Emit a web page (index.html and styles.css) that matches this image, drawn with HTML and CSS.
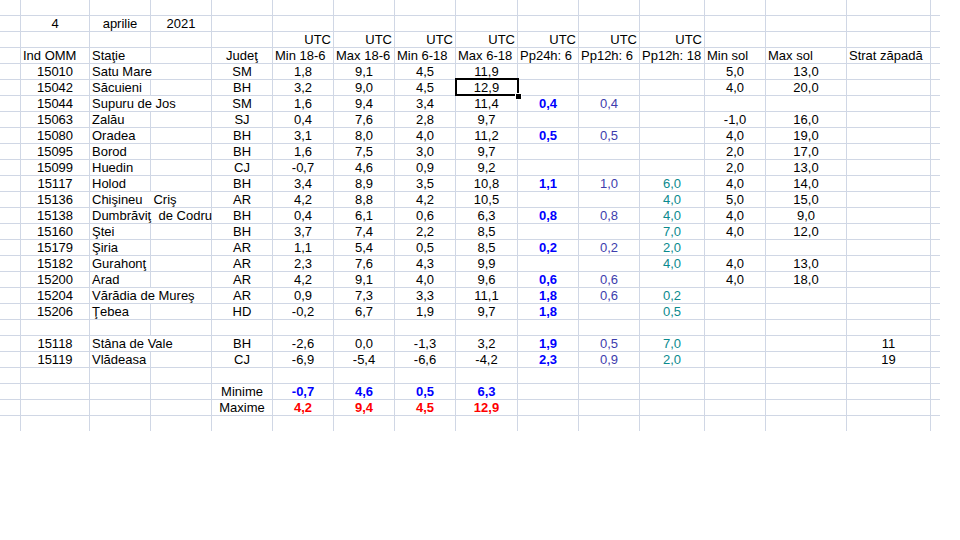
FILE: index.html
```html
<!DOCTYPE html>
<html lang="ro">
<head>
<meta charset="utf-8">
<title>Temperaturi 4 aprilie 2021</title>
<link rel="stylesheet" href="styles.css">
</head>
<body>
<div class="sheet">
  <div class="row"></div>
  <div class="row"><span class="ind">4</span><span class="mon">aprilie</span><span class="yr">2021</span></div>
  <div class="row"><span class="t1 r">UTC</span><span class="t2 r">UTC</span><span class="t3 r">UTC</span><span class="t4 r">UTC</span><span class="p24 r">UTC</span><span class="p6 r">UTC</span><span class="p18 r">UTC</span></div>
  <div class="row hdr"><span class="ind l">Ind OMM</span><span class="name">Staţie</span><span class="jud">Judeţ</span><span class="t1 l">Min 18-6</span><span class="t2 l">Max 18-6</span><span class="t3 l">Min 6-18</span><span class="t4 l">Max 6-18</span><span class="p24 l">Pp24h: 6</span><span class="p6 l">Pp12h: 6</span><span class="p18 l">Pp12h: 18</span><span class="smin l">Min sol</span><span class="smax l">Max sol</span><span class="snow l">Strat zăpadă</span></div>

  <div class="row"><span class="ind">15010</span><span class="name wide">Satu Mare</span><span class="jud">SM</span><span class="t1">1,8</span><span class="t2">9,1</span><span class="t3">4,5</span><span class="t4">11,9</span><span class="smin">5,0</span><span class="smax">13,0</span></div>
  <div class="row"><span class="ind">15042</span><span class="name">Săcuieni</span><span class="jud">BH</span><span class="t1">3,2</span><span class="t2">9,0</span><span class="t3">4,5</span><span class="t4 sel">12,9</span><span class="smin">4,0</span><span class="smax">20,0</span></div>
  <div class="row"><span class="ind">15044</span><span class="name wide">Supuru de Jos</span><span class="jud">SM</span><span class="t1">1,6</span><span class="t2">9,4</span><span class="t3">3,4</span><span class="t4">11,4</span><span class="p24">0,4</span><span class="p6">0,4</span></div>
  <div class="row"><span class="ind">15063</span><span class="name">Zalău</span><span class="jud">SJ</span><span class="t1">0,4</span><span class="t2">7,6</span><span class="t3">2,8</span><span class="t4">9,7</span><span class="smin">-1,0</span><span class="smax">16,0</span></div>
  <div class="row"><span class="ind">15080</span><span class="name">Oradea</span><span class="jud">BH</span><span class="t1">3,1</span><span class="t2">8,0</span><span class="t3">4,0</span><span class="t4">11,2</span><span class="p24">0,5</span><span class="p6">0,5</span><span class="smin">4,0</span><span class="smax">19,0</span></div>
  <div class="row"><span class="ind">15095</span><span class="name">Borod</span><span class="jud">BH</span><span class="t1">1,6</span><span class="t2">7,5</span><span class="t3">3,0</span><span class="t4">9,7</span><span class="smin">2,0</span><span class="smax">17,0</span></div>
  <div class="row"><span class="ind">15099</span><span class="name">Huedin</span><span class="jud">CJ</span><span class="t1">-0,7</span><span class="t2">4,6</span><span class="t3">0,9</span><span class="t4">9,2</span><span class="smin">2,0</span><span class="smax">13,0</span></div>
  <div class="row"><span class="ind">15117</span><span class="name">Holod</span><span class="jud">BH</span><span class="t1">3,4</span><span class="t2">8,9</span><span class="t3">3,5</span><span class="t4">10,8</span><span class="p24">1,1</span><span class="p6">1,0</span><span class="p18">6,0</span><span class="smin">4,0</span><span class="smax">14,0</span></div>
  <div class="row"><span class="ind">15136</span><span class="name wide">Chişineu   Criş</span><span class="jud">AR</span><span class="t1">4,2</span><span class="t2">8,8</span><span class="t3">4,2</span><span class="t4">10,5</span><span class="p18">4,0</span><span class="smin">5,0</span><span class="smax">15,0</span></div>
  <div class="row"><span class="ind">15138</span><span class="name wide">Dumbrăviţ  de Codru</span><span class="jud">BH</span><span class="t1">0,4</span><span class="t2">6,1</span><span class="t3">0,6</span><span class="t4">6,3</span><span class="p24">0,8</span><span class="p6">0,8</span><span class="p18">4,0</span><span class="smin">4,0</span><span class="smax">9,0</span></div>
  <div class="row"><span class="ind">15160</span><span class="name">Ştei</span><span class="jud">BH</span><span class="t1">3,7</span><span class="t2">7,4</span><span class="t3">2,2</span><span class="t4">8,5</span><span class="p18">7,0</span><span class="smin">4,0</span><span class="smax">12,0</span></div>
  <div class="row"><span class="ind">15179</span><span class="name">Şiria</span><span class="jud">AR</span><span class="t1">1,1</span><span class="t2">5,4</span><span class="t3">0,5</span><span class="t4">8,5</span><span class="p24">0,2</span><span class="p6">0,2</span><span class="p18">2,0</span></div>
  <div class="row"><span class="ind">15182</span><span class="name">Gurahonţ</span><span class="jud">AR</span><span class="t1">2,3</span><span class="t2">7,6</span><span class="t3">4,3</span><span class="t4">9,9</span><span class="p18">4,0</span><span class="smin">4,0</span><span class="smax">13,0</span></div>
  <div class="row"><span class="ind">15200</span><span class="name">Arad</span><span class="jud">AR</span><span class="t1">4,2</span><span class="t2">9,1</span><span class="t3">4,0</span><span class="t4">9,6</span><span class="p24">0,6</span><span class="p6">0,6</span><span class="smin">4,0</span><span class="smax">18,0</span></div>
  <div class="row"><span class="ind">15204</span><span class="name wide">Vărădia de Mureş</span><span class="jud">AR</span><span class="t1">0,9</span><span class="t2">7,3</span><span class="t3">3,3</span><span class="t4">11,1</span><span class="p24">1,8</span><span class="p6">0,6</span><span class="p18">0,2</span></div>
  <div class="row"><span class="ind">15206</span><span class="name">Ţebea</span><span class="jud">HD</span><span class="t1">-0,2</span><span class="t2">6,7</span><span class="t3">1,9</span><span class="t4">9,7</span><span class="p24">1,8</span><span class="p18">0,5</span></div>
  <div class="row"></div>
  <div class="row"><span class="ind">15118</span><span class="name wide">Stâna de Vale</span><span class="jud">BH</span><span class="t1">-2,6</span><span class="t2">0,0</span><span class="t3">-1,3</span><span class="t4">3,2</span><span class="p24">1,9</span><span class="p6">0,5</span><span class="p18">7,0</span><span class="snow">11</span></div>
  <div class="row"><span class="ind">15119</span><span class="name">Vlădeasa</span><span class="jud">CJ</span><span class="t1">-6,9</span><span class="t2">-5,4</span><span class="t3">-6,6</span><span class="t4">-4,2</span><span class="p24">2,3</span><span class="p6">0,9</span><span class="p18">2,0</span><span class="snow">19</span></div>
  <div class="row"></div>
  <div class="row min"><span class="jud">Minime</span><span class="t1">-0,7</span><span class="t2">4,6</span><span class="t3">0,5</span><span class="t4">6,3</span></div>
  <div class="row max"><span class="jud">Maxime</span><span class="t1">4,2</span><span class="t2">9,4</span><span class="t3">4,5</span><span class="t4">12,9</span></div>
  <div class="row"></div>
</div>
</body>
</html>
```
FILE: styles.css
```css
html, body {
  margin: 0;
  padding: 0;
  background: #ffffff;
}

body {
  font-family: "Liberation Sans", Arial, sans-serif;
  font-size: 13px;
  color: #000000;
}

.sheet {
  --grid: #d0d7e5;
  width: 940px;
  height: 431px;
  display: flex;
  flex-direction: column;
  row-gap: 1px;
  background:
    linear-gradient(var(--grid), var(--grid)) 20px 0 / 1px 100% no-repeat,
    linear-gradient(var(--grid), var(--grid)) 89px 0 / 1px 100% no-repeat,
    linear-gradient(var(--grid), var(--grid)) 150px 0 / 1px 100% no-repeat,
    linear-gradient(var(--grid), var(--grid)) 211px 0 / 1px 100% no-repeat,
    linear-gradient(var(--grid), var(--grid)) 272px 0 / 1px 100% no-repeat,
    linear-gradient(var(--grid), var(--grid)) 333px 0 / 1px 100% no-repeat,
    linear-gradient(var(--grid), var(--grid)) 394px 0 / 1px 100% no-repeat,
    linear-gradient(var(--grid), var(--grid)) 455px 0 / 1px 100% no-repeat,
    linear-gradient(var(--grid), var(--grid)) 517px 0 / 1px 100% no-repeat,
    linear-gradient(var(--grid), var(--grid)) 578px 0 / 1px 100% no-repeat,
    linear-gradient(var(--grid), var(--grid)) 639px 0 / 1px 100% no-repeat,
    linear-gradient(var(--grid), var(--grid)) 704px 0 / 1px 100% no-repeat,
    linear-gradient(var(--grid), var(--grid)) 765px 0 / 1px 100% no-repeat,
    linear-gradient(var(--grid), var(--grid)) 846px 0 / 1px 100% no-repeat,
    linear-gradient(var(--grid), var(--grid)) 930px 0 / 1px 100% no-repeat,
    repeating-linear-gradient(to bottom, transparent 0 15px, var(--grid) 15px 16px);
}

.row {
  display: grid;
  grid-template-columns: 20px 68px 60px 60px 60px 60px 60px 60px 61px 60px 60px 64px 60px 80px 83px 9px;
  grid-template-rows: 15px;
  column-gap: 1px;
  height: 15px;
  flex: none;
}

.row > span {
  grid-row: 1;
  line-height: 15px;
  height: 15px;
  white-space: pre;
  overflow: visible;
  padding: 0 2px;
  text-align: center;
}

/* column placement */
.ind  { grid-column: 2; }
.mon  { grid-column: 3; }
.yr   { grid-column: 4; }
.name { grid-column: 3; text-align: left !important; }
.name.wide { grid-column: 3 / span 2; background: #ffffff; }
.jud  { grid-column: 5; }
.t1   { grid-column: 6; }
.t2   { grid-column: 7; }
.t3   { grid-column: 8; }
.t4   { grid-column: 9; }
.p24  { grid-column: 10; }
.p6   { grid-column: 11; }
.p18  { grid-column: 12; }
.smin { grid-column: 13; }
.smax { grid-column: 14; }
.snow { grid-column: 15; }

/* alignment */
.row > .l { text-align: left; }
.row > .r { text-align: right; }

/* value colours */
.row > .p24 { color: #0000ff; font-weight: bold; }
.row > .p6  { color: #3d3dad; }
.row > .p18 { color: #0a8a8e; }
.row > .p24.r, .row > .p6.r, .row > .p18.r,
.hdr > .p24, .hdr > .p6, .hdr > .p18 { color: #000000; font-weight: normal; }

.min > span:not(.jud) { color: #0000ff; font-weight: bold; }
.max > span:not(.jud) { color: #ff0000; font-weight: bold; }

/* active cell */
.sel { position: relative; }
.sel::before {
  content: "";
  position: absolute;
  left: -1px;
  top: -2px;
  right: -2px;
  bottom: -1px;
  border: 2px solid #000000;
}
.sel::after {
  content: "";
  position: absolute;
  right: -4px;
  bottom: -4px;
  width: 5px;
  height: 5px;
  background: #000000;
  box-shadow: 0 0 0 1px #ffffff;
}
```
